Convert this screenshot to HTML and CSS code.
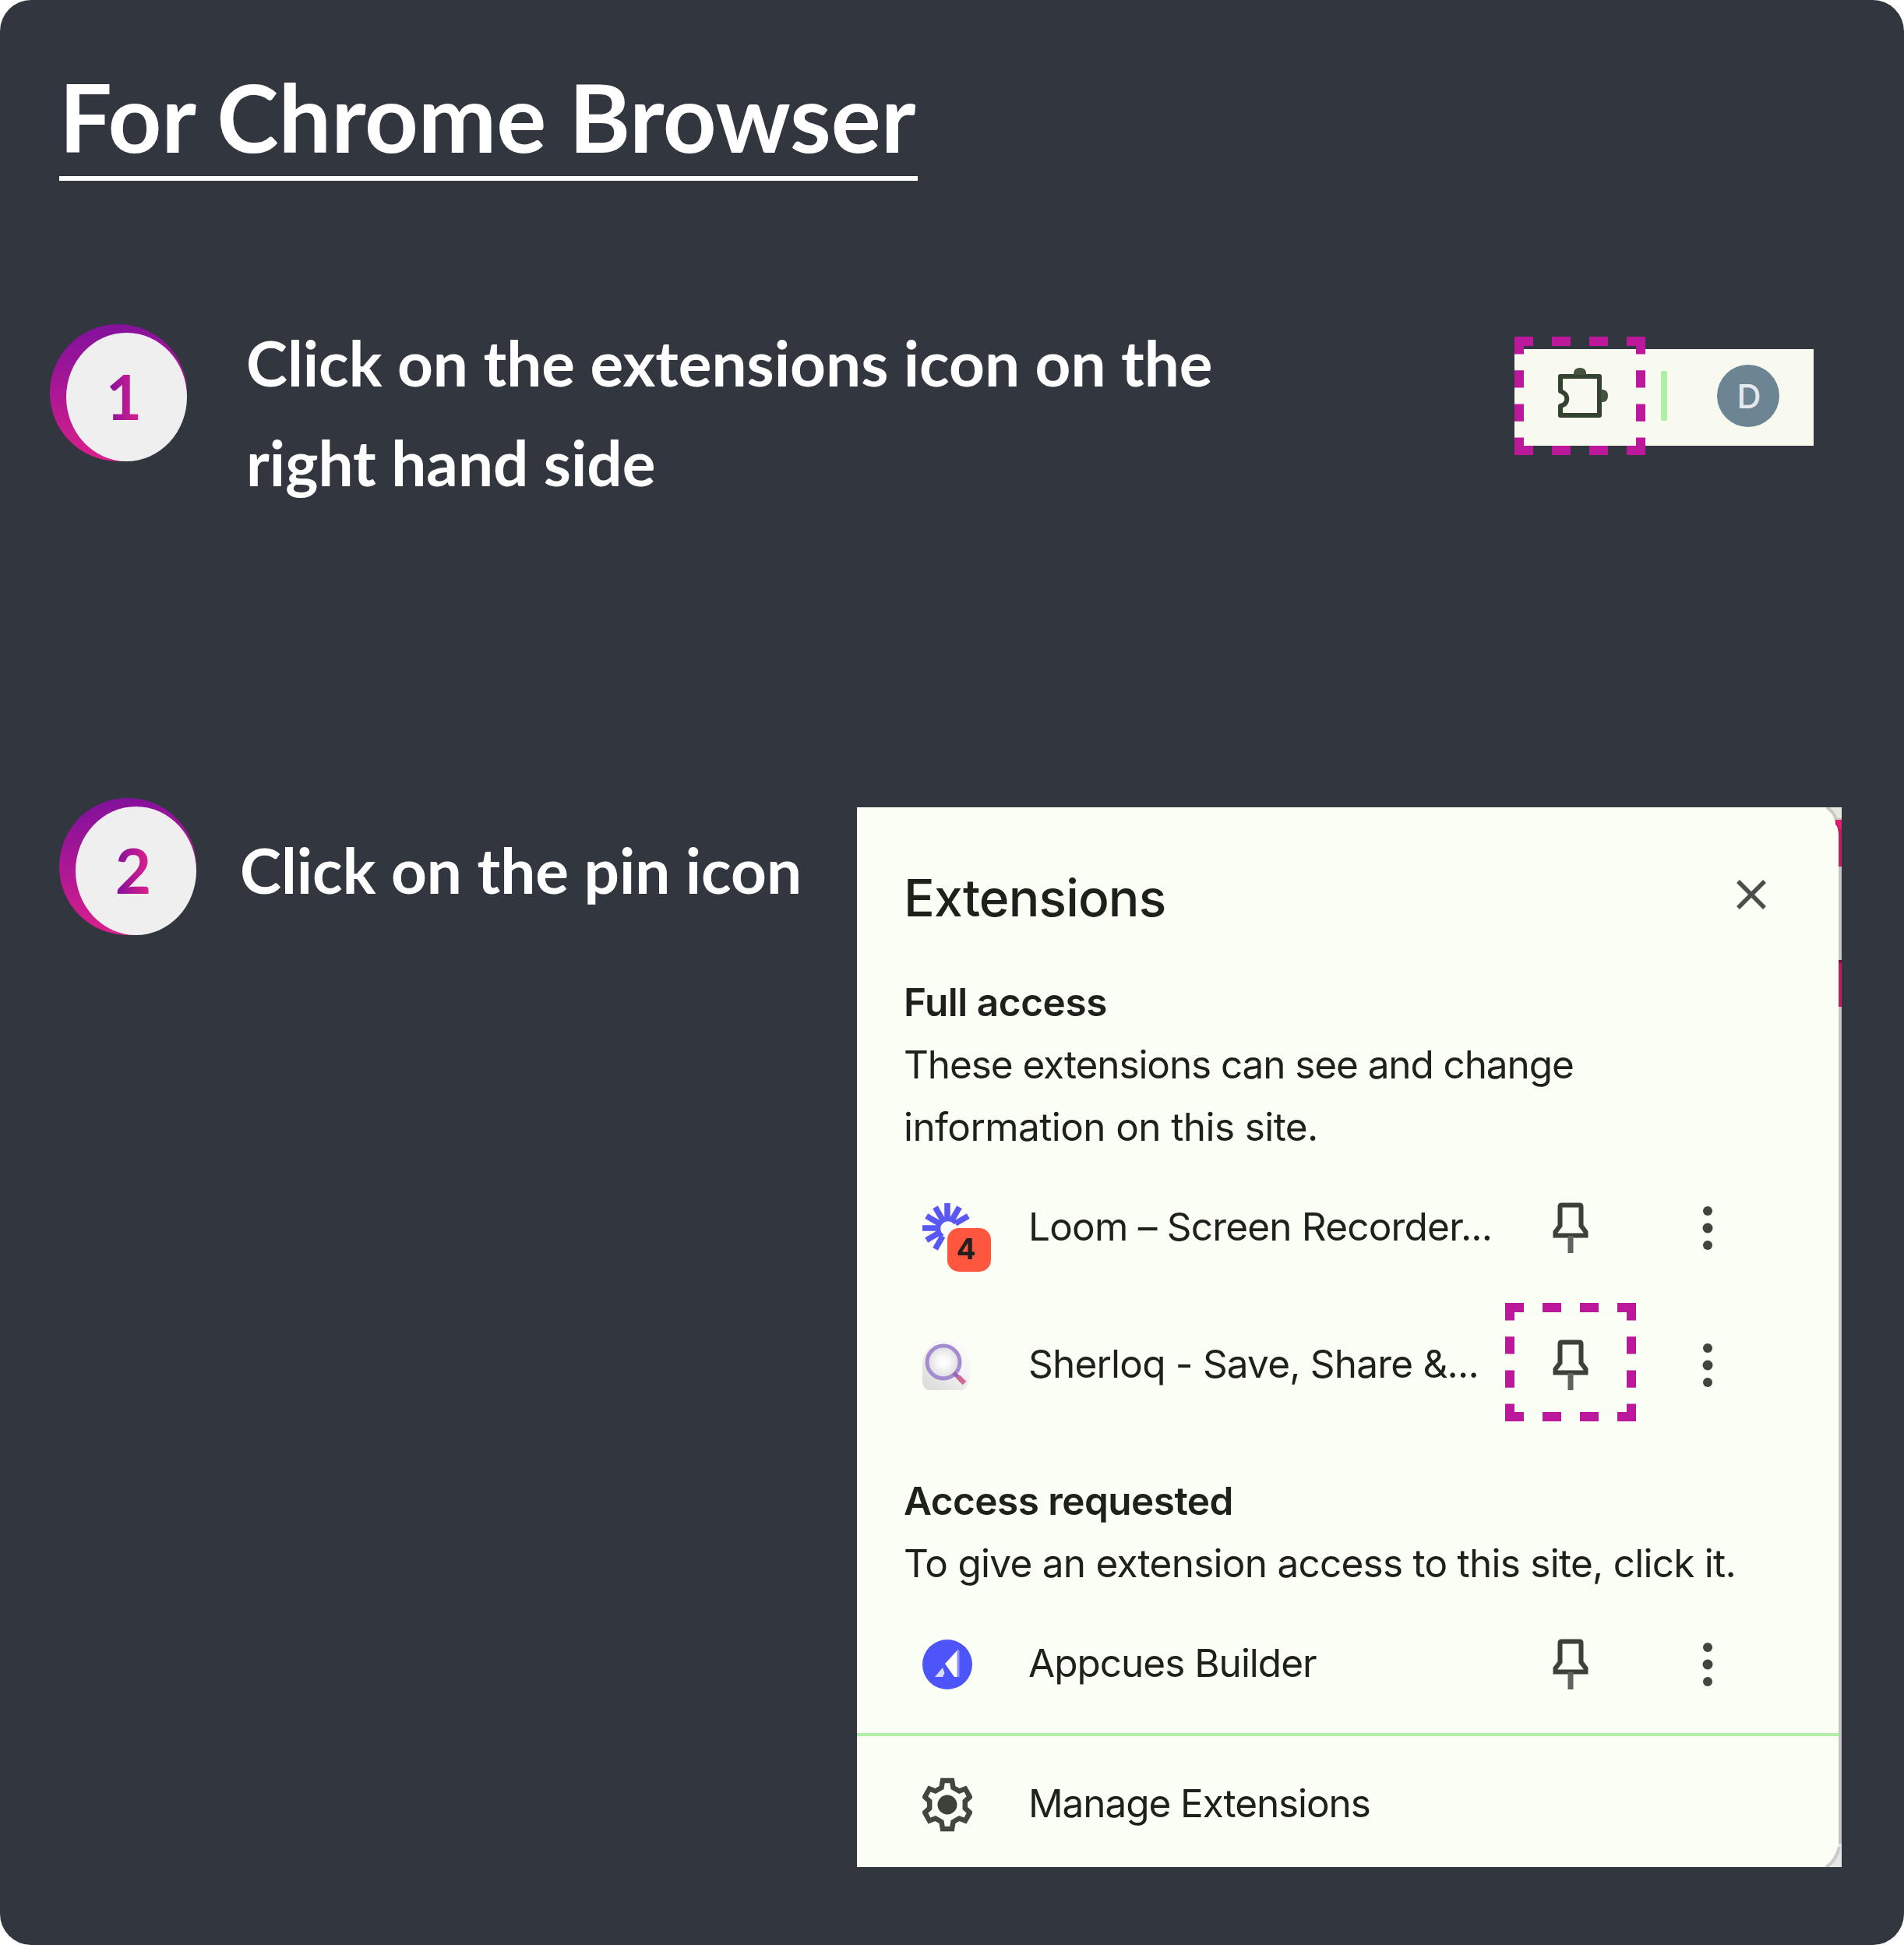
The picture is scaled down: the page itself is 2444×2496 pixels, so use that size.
FILE: index.html
```html
<!DOCTYPE html>
<html lang="en">
<head>
<meta charset="utf-8">
<title>For Chrome Browser</title>
<link rel="stylesheet" href="styles.css">
</head>
<body>
<svg class="defs" width="0" height="0" aria-hidden="true">
  <symbol id="pin" viewBox="0 0 48 72">
    <path d="M12.5 6.5H35.5Q37.5 6.5 37.5 8.5V33L43.5 41V45.5H4.500V41L10.500 33V8.500Q10.500 6.500 12.500 6.500Z" fill="none" stroke="#3c4039" stroke-width="6"/>
    <path d="M24 46V68" stroke="#5f635d" stroke-width="7"/>
  </symbol>
  <symbol id="dots" viewBox="0 0 16 64">
    <g fill="#41453f"><circle cx="8" cy="10" r="6"/><circle cx="8" cy="32" r="6.500"/><circle cx="8" cy="54" r="6"/></g>
  </symbol>
  <symbol id="highlight" viewBox="0 0 168 152">
    <g fill="none" stroke="#bb189b" stroke-width="12">
      <path d="M0 6H168M0 146H168" stroke-dasharray="24 24"/>
      <path d="M6 0V152M162 0V152" stroke-dasharray="22.400 20.800"/>
    </g>
  </symbol>
</svg>

<main class="card">
  <h1 class="title">For Chrome Browser</h1>

  <section class="step step-one">
    <div class="badge"><div class="badge-face"><span class="badge-number">1</span></div></div>
    <p class="step-text">Click on the extensions icon on the<br>right hand side</p>
    <div class="toolbar">
      <svg class="puzzle" viewBox="0 0 72 72">
        <path d="M7 15H57V65H7V53C18 50 18 38 7 34Z" fill="none" stroke="#34432f" stroke-width="6" stroke-linejoin="round"/>
        <path d="M24 13V10Q25 4 32 4T40 10V13Z" fill="#44523f"/>
        <path d="M59 32H62Q68 33 68 40T62 48H59Z" fill="#44523f"/>
      </svg>
      <span class="separator"></span>
      <span class="avatar">D</span>
      <svg class="highlight highlight-toolbar"><use href="#highlight"/></svg>
    </div>
  </section>

  <section class="step step-two">
    <div class="badge"><div class="badge-face"><span class="badge-number">2</span></div></div>
    <p class="step-text">Click on the pin icon</p>

    <div class="panel">
      <header class="panel-header">
        <h2 class="panel-title">Extensions</h2>
        <svg class="close" viewBox="0 0 40 40"><path d="M3 3L37 37M37 3L3 37" stroke="#4b4f49" stroke-width="5.500"/></svg>
      </header>

      <div class="group">
        <h3 class="group-title full">Full access</h3>
        <p class="group-line wide">These extensions can see and change</p>
        <p class="group-line info">information on this site.</p>
      </div>

      <div class="row">
        <span class="app-icon">
          <svg viewBox="-32 -32 64 64">
            <g stroke="#5a58f5" fill="none">
              <path stroke-width="7.500" d="M0 -32V-12M-32 0H-12M-15.500 -26.800L-6 -10.400M15.500 -26.800L6 -10.400M-26.800 -15.500L-10.400 -6M-26.800 15.500L-10.400 6M-15.500 26.800L-6 10.400M26.800 -15.500L10.400 -6"/>
              <path stroke-width="6" d="M11 -6.500A12.500 12.500 0 1 0 -6.300 11"/>
            </g>
          </svg>
          <span class="count">4</span>
        </span>
        <span class="name loom">Loom – Screen Recorder...</span>
        <svg class="pin"><use href="#pin"/></svg>
        <svg class="dots"><use href="#dots"/></svg>
      </div>

      <div class="row">
        <span class="app-icon">
          <svg viewBox="0 0 64 64">
            <defs>
              <radialGradient id="lens"><stop offset="0" stop-color="#fff"/><stop offset=".3" stop-color="#fafafa"/><stop offset="1" stop-color="#dcdcde"/></radialGradient>
              <linearGradient id="tile" x1="1" y1="0" x2="0.300" y2="1"><stop offset="0" stop-color="#fff"/><stop offset=".45" stop-color="#f6f5f6"/><stop offset="1" stop-color="#dedfdc"/></linearGradient>
            </defs>
            <path d="M0 34A30 32 0 0 1 62 30V44Q60 58 52 64H8Q0 62 0 52Z" fill="url(#tile)"/>
            <circle cx="27" cy="28" r="21" fill="url(#lens)" stroke="#a58bd0" stroke-width="5"/>
            <path d="M40 42L47 48" stroke="#9a66b5" stroke-width="5"/>
            <path d="M46 47L54 55" stroke="#cf6a98" stroke-width="6.500"/>
          </svg>
        </span>
        <span class="name sherloq">Sherloq - Save, Share &amp;...</span>
        <span class="pin-target">
          <svg class="pin"><use href="#pin"/></svg>
          <svg class="highlight highlight-pin"><use href="#highlight"/></svg>
        </span>
        <svg class="dots"><use href="#dots"/></svg>
      </div>

      <div class="group requested">
        <h3 class="group-title access">Access requested</h3>
        <p class="group-line give">To give an extension access to this site, click it.</p>
      </div>

      <div class="row">
        <span class="app-icon">
          <svg viewBox="0 0 64 64">
            <circle cx="32" cy="32" r="32" fill="#4c54fa"/>
            <path d="M46 12.500V48H41L29 31Z" fill="#fff"/>
            <path d="M46 14V48" stroke="#8a90fc" stroke-width="3"/>
            <path d="M16 48L26 36L28.500 43L26 48Z" fill="#dcdcff"/>
          </svg>
        </span>
        <span class="name appcues">Appcues Builder</span>
        <svg class="pin"><use href="#pin"/></svg>
        <svg class="dots"><use href="#dots"/></svg>
      </div>

      <footer class="row manage">
        <span class="app-icon gear">
          <svg viewBox="-32 -36 64 72">
            <path d="M-6 -31H6L7.500 -22L15.300 -17.500L23 -20.500L28.800 -10L22.800 -4.500V4.500L28.800 10L23 20.500L15.300 17.500L7.500 22L6 31H-6L-7.500 22L-15.300 17.500L-23 20.500L-28.800 10L-22.800 4.500V-4.500L-28.800 -10L-23 -20.500L-15.300 -17.500L-7.500 -22Z" fill="none" stroke="#41463e" stroke-width="6.500"/>
            <circle r="12.500" fill="#3c4139"/>
          </svg>
        </span>
        <span class="name manage-name">Manage Extensions</span>
      </footer>

      <svg class="panel-edge" viewBox="0 0 24 1360">
        <path d="M20 16H24V1360H20Z" fill="#c4c4c4"/>
        <path d="M4 0H24V16H14Q13 6 4 0Z" fill="#e6e9e0"/>
        <path d="M5 0Q15 7 17 16H24" fill="none" stroke="#c6cabf" stroke-width="4"/>
        <path d="M16 16H24V76H20V34Q19 24 16 22Z" fill="#c11a63"/>
        <path d="M17 16H24V28H20Z" fill="#e31c74"/>
        <path d="M20 196H24V256H20Z" fill="#c11a63"/>
        <path d="M20 196H24V200H20Z" fill="#7b1240"/>
        <path d="M2 1360Q18 1350 20 1330H24V1360Z" fill="#e6e6e6"/>
        <path d="M4 1360Q17 1352 21 1334" fill="none" stroke="#cbcbcb" stroke-width="4"/>
      </svg>
    </div>
  </section>
</main>
</body>
</html>
```

FILE: styles.css
```css
* {
  box-sizing: border-box;
}

body {
  margin: 0;
  background: #fff;
}

h1, h2, h3, p {
  margin: 0;
}

svg {
  display: block;
  flex: none;
}

.defs {
  position: absolute;
}

.card {
  display: flex;
  flex-direction: column;
  width: 2444px;
  height: 2496px;
  padding-top: 78px;
  border-radius: 40px;
  background: #32363f;
  color: #fff;
  font-family: Lato, sans-serif;
}

.title {
  width: 1102px;
  height: 154px;
  margin-left: 76px;
  border-bottom: 6px solid #fff;
  font-size: 120px;
  font-weight: 700;
  line-height: 144px;
  letter-spacing: -0.13px;
  white-space: nowrap;
}

.step {
  display: flex;
  align-items: flex-start;
}

.step-one {
  margin-top: 169px;
  padding: 0 116px 0 64px;
}

.step-two {
  margin-top: 367px;
  padding: 0 80px 0 76px;
}

.step-text {
  font-size: 80px;
  font-weight: 700;
  line-height: 128px;
  white-space: nowrap;
}

.step-one .step-text {
  margin-left: 76px;
}

.step-two .step-text {
  margin: 28px 0 0 56px;
}

.badge {
  display: flex;
  flex: none;
  justify-content: flex-end;
  align-items: flex-end;
  width: 176px;
  height: 176px;
  border-radius: 50%;
  background: linear-gradient(172deg, #7d109d 0%, #e5218a 100%);
}

.step-one .badge {
  margin-top: 15px;
}

.badge-face {
  display: flex;
  justify-content: center;
  width: 155px;
  height: 165px;
  padding: 33px 7px 0 0;
  border-radius: 50%;
  background: #efefef;
}

.badge-number {
  height: 96px;
  font-size: 80px;
  font-weight: 700;
  line-height: 96px;
  background: linear-gradient(90deg, #7d109d, #e5218a);
  background-clip: text;
  -webkit-background-clip: text;
  color: transparent;
}

.toolbar {
  position: relative;
  display: flex;
  align-items: flex-start;
  width: 384px;
  height: 124px;
  margin: 47px 0 0 auto;
  padding-top: 20px;
  background: #f8faf0;
}

.puzzle {
  width: 72px;
  height: 72px;
  margin-left: 52px;
}

.separator {
  width: 8px;
  height: 64px;
  margin: 8px 0 0 64px;
  border-radius: 2px;
  background: #aef0a5;
}

.avatar {
  width: 80px;
  height: 80px;
  margin-left: 64px;
  padding-left: 2px;
  border-radius: 50%;
  background: #6c8593;
  color: #e3e9ef;
  font: 500 43px/81px Inter, sans-serif;
  text-align: center;
}

.highlight {
  position: absolute;
  width: 168px;
  height: 152px;
}

.highlight-toolbar {
  top: -16px;
  left: 0;
}

.panel {
  position: relative;
  width: 1264px;
  height: 1360px;
  margin: 12px 0 0 auto;
  padding-top: 76px;
  background: #fbfef4;
  color: #1d201b;
  font-family: Inter, sans-serif;
  font-size: 49.5px;
  line-height: 80px;
  white-space: nowrap;
}

.panel-header {
  display: flex;
  justify-content: space-between;
  height: 80px;
  padding: 0 96px 0 60px;
}

.panel-title {
  font-size: 66px;
  font-weight: 500;
  letter-spacing: -0.9px;
}

.close {
  width: 40px;
  height: 40px;
  margin-top: 16px;
}

.group {
  height: 242px;
  margin: 54px 0 0 60px;
}

.requested {
  height: 162px;
  margin-top: 46px;
}

.group-title {
  font-size: inherit;
  font-weight: 600;
}

.full { letter-spacing: -0.45px; }
.wide { letter-spacing: -1.1px; }
.info { letter-spacing: -0.6px; }
.access { letter-spacing: -0.55px; }
.give { letter-spacing: -0.75px; }
.loom { letter-spacing: -0.8px; }
.sherloq { letter-spacing: -0.8px; }
.appcues { letter-spacing: -1px; }
.manage-name { letter-spacing: -1.1px; }

.row {
  display: flex;
  align-items: center;
  height: 176px;
  padding-left: 84px;
}

.app-icon {
  position: relative;
  width: 64px;
  height: 64px;
}

.gear {
  height: 72px;
}

.app-icon svg {
  width: 100%;
  height: 100%;
}

.count {
  position: absolute;
  top: 32px;
  left: 32px;
  width: 56px;
  height: 56px;
  padding-right: 8px;
  border-radius: 15px;
  background: #ff563f;
  color: #231f20;
  font-size: 37px;
  font-weight: 700;
  line-height: 53px;
  text-align: center;
}

.name {
  width: 672px;
  margin-left: 72px;
  padding-bottom: 4px;
}

.pin {
  width: 48px;
  height: 72px;
}

.pin-target {
  position: relative;
}

.highlight-pin {
  top: -44px;
  left: -60px;
}

.dots {
  width: 16px;
  height: 64px;
  margin-left: 144px;
}

.manage {
  height: 172px;
  padding-top: 8px;
  border-top: 4px solid #aef0a5;
}

.panel-edge {
  position: absolute;
  top: 0;
  right: 0;
  width: 24px;
  height: 1360px;
}
```
